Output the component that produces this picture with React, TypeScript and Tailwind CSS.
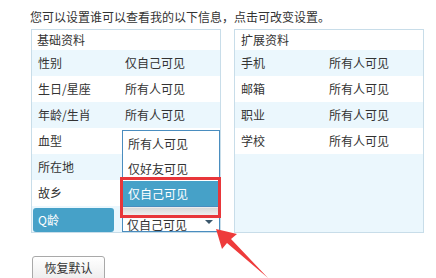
const BASIC = [
  { label: "性别", value: "仅自己可见" },
  { label: "生日/星座", value: "所有人可见" },
  { label: "年龄/生肖", value: "所有人可见" },
  { label: "血型", value: "" },
  { label: "所在地", value: "" },
  { label: "故乡", value: "" },
];

const EXTRA = [
  { label: "手机", value: "所有人可见" },
  { label: "邮箱", value: "所有人可见" },
  { label: "职业", value: "所有人可见" },
  { label: "学校", value: "所有人可见" },
];

const OPTIONS = ["所有人可见", "仅好友可见", "仅自己可见"];

// 下拉列表展开状态 + 红框标注 + 箭头
function PrivacySelect() {
  return (
    <div className="relative ml-[90px] w-[98px]">
      <div className="absolute bottom-full left-0 w-[98px] border-x border-t border-[#4a8dbf] bg-white">
        {OPTIONS.map((o, i) => (
          <div
            key={o}
            className={`h-[25px] pl-[5px] pt-[6px] leading-[14px] ${i === 2 ? "bg-[#46a1c8] text-white" : "text-[#333]"}`}
          >
            {o}
          </div>
        ))}
      </div>
      <div className="flex h-[26px] border border-[#4a8dbf] bg-[linear-gradient(180deg,#ffffff_0px,#d9d9d9_1px,#f4f4f4_10px,#ffffff_13px)] pl-[4px] pt-[11px] leading-[14px] text-[#333]">
        <span>仅自己可见</span>
        <span className="ml-auto mr-[6px] mt-[2px] h-0 w-0 border-x-[4px] border-t-[4px] border-x-transparent border-t-[#3b566b]" />
      </div>
      <div className="pointer-events-none absolute left-[-2px] top-[-29px] h-[41px] w-[101px] border-[3px] border-[#e8363a]" />
    </div>
  );
}

export default function App() {
  return (
    <div className="relative h-[278px] w-[436px] overflow-hidden bg-white text-[12px] text-[#333] [font-family:'Noto_Sans_CJK_SC','Liberation_Sans',sans-serif]">
      <p className="pl-[30px] pt-[10px] leading-[14px]">您可以设置谁可以查看我的以下信息，点击可改变设置。</p>

      <div className="ml-[31px] mt-[5px] flex gap-[13px]">
        {/* 基础资料 */}
        <div className="flex h-[204px] w-[190px] flex-col border border-[#c8dde9]">
          <div className="h-[20px] pl-[5px] pt-[3px] leading-[14px]">基础资料</div>
          {BASIC.map((r, i) => (
            <div key={r.label} className={`flex h-[26px] items-center leading-[14px] ${i % 2 === 0 ? "bg-[#ebf7fd]" : "bg-white"}`}>
              <span className="w-[93px] pl-[6px]">{r.label}</span>
              <span>{r.value}</span>
            </div>
          ))}
          <div className="flex h-[26px] bg-[#ebf7fd] leading-[14px]">
            <div className="ml-[1px] mt-[2px] h-[24px] w-[81px] rounded-[3px] bg-[#46a1c8] pl-[5px] pt-[5px] text-white">Q龄</div>
            <div className="-ml-[82px]">
              <PrivacySelect />
            </div>
          </div>
        </div>

        {/* 扩展资料 */}
        <div className="flex h-[204px] w-[190px] flex-col border border-[#c8dde9] bg-[#ebf7fd]">
          <div className="h-[20px] bg-white pl-[6px] pt-[3px] leading-[14px]">扩展资料</div>
          {EXTRA.map((r, i) => (
            <div key={r.label} className={`flex h-[26px] items-center leading-[14px] ${i % 2 === 0 ? "bg-[#ebf7fd]" : "bg-white"}`}>
              <span className="w-[94px] pl-[6px]">{r.label}</span>
              <span>{r.value}</span>
            </div>
          ))}
        </div>
      </div>

      <button
        type="button"
        className="ml-[32px] mt-[23px] h-[26px] w-[73px] rounded-[3px] border border-[#a9a9a9] bg-[linear-gradient(180deg,#ffffff,#ececec)] pb-[3px] leading-[14px] text-[#333]"
      >
        恢复默认
      </button>

      <svg className="pointer-events-none absolute left-0 top-0" width="436" height="278" viewBox="0 0 436 278">
        <polygon points="216,229 237,234 231,239 268,278 227,243 222,249" fill="#ee3b3b" />
      </svg>
    </div>
  );
}
